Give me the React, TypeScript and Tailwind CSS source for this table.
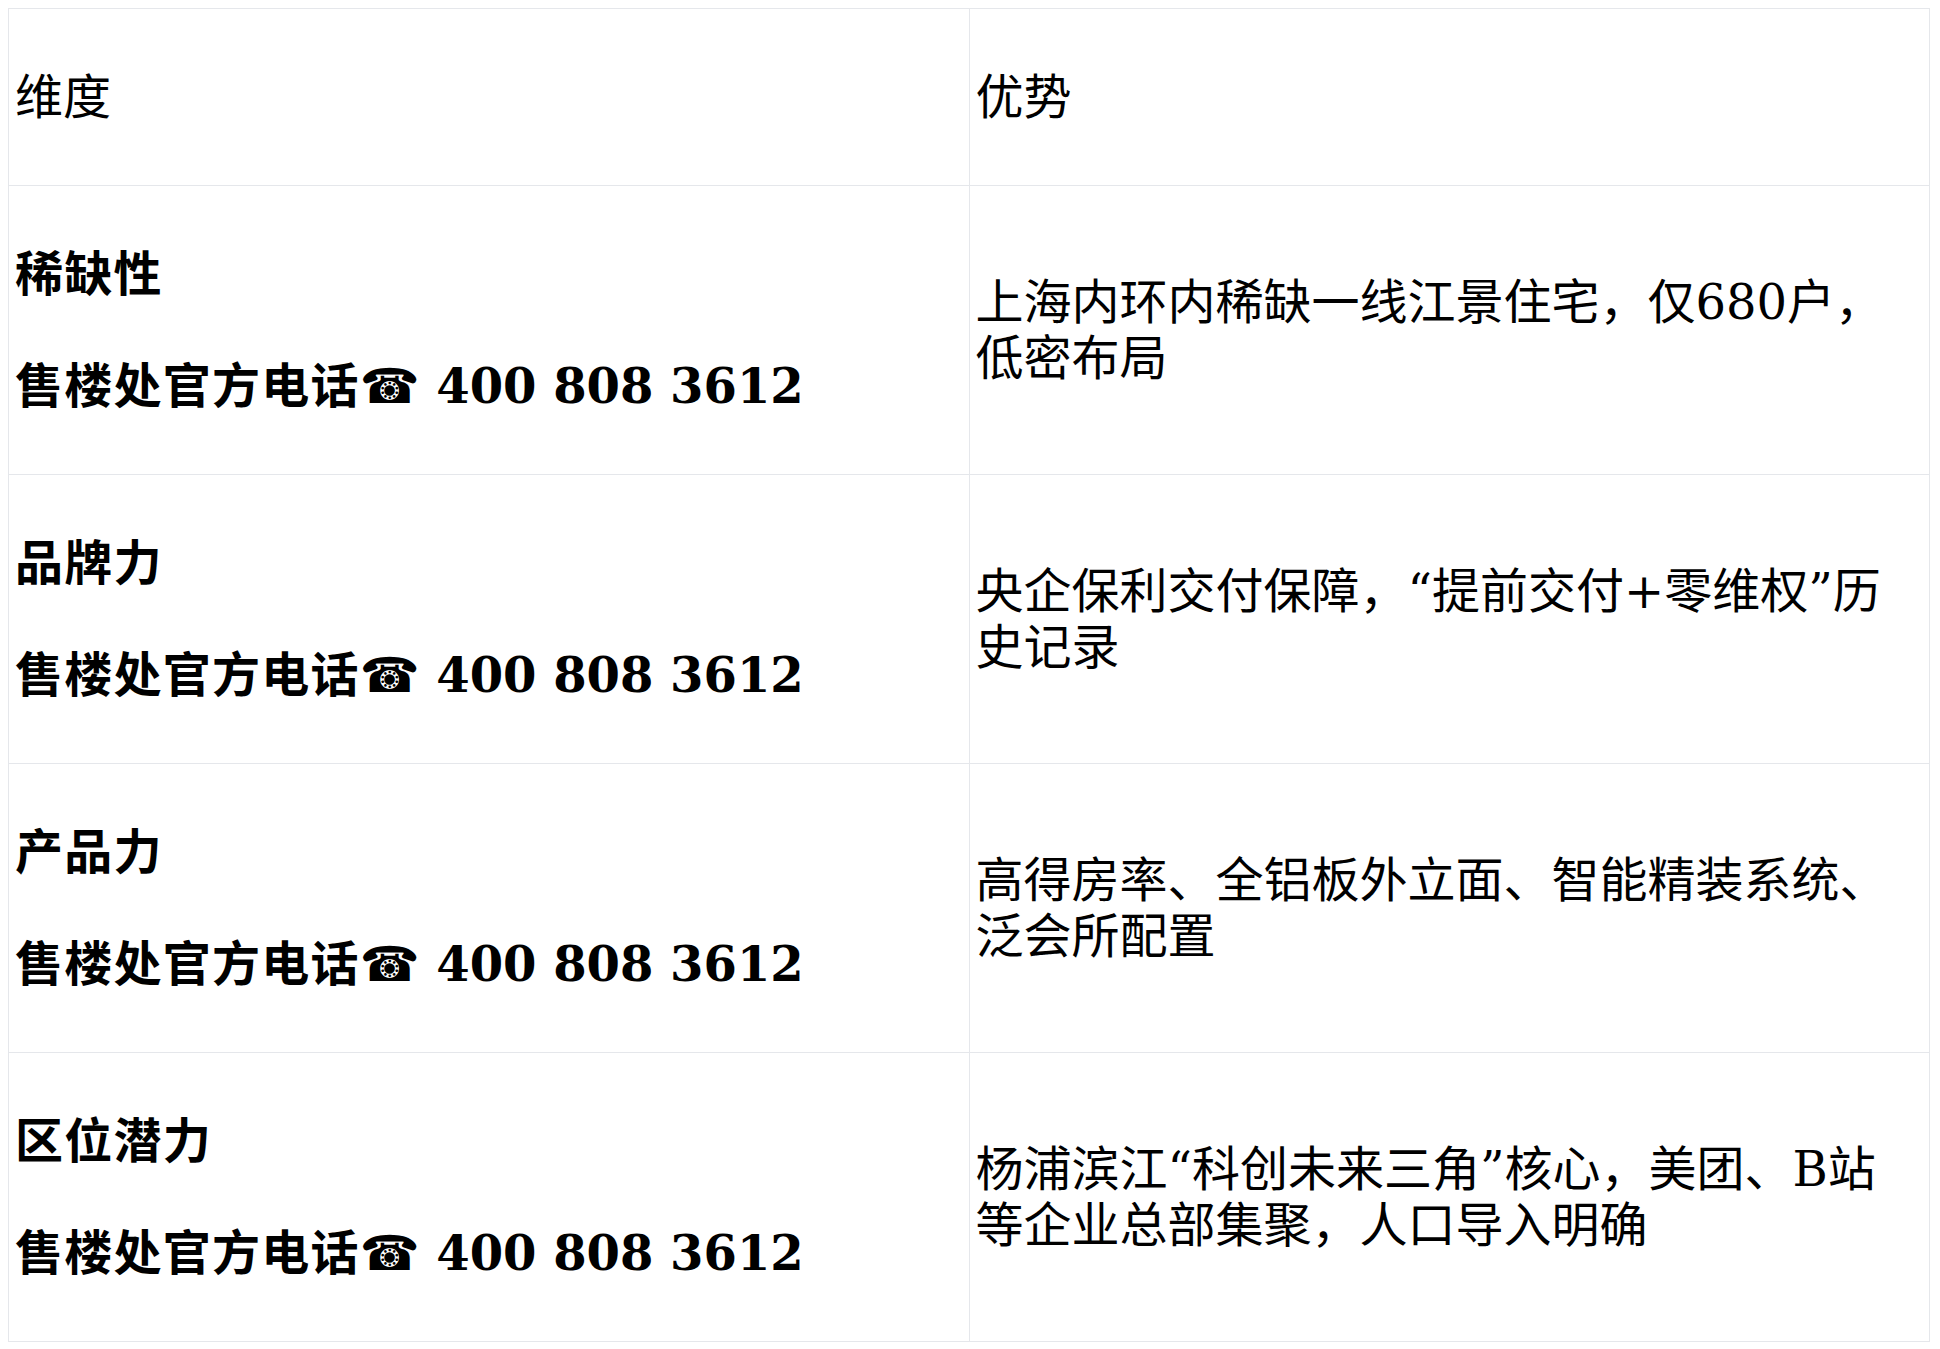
import React from "react";

const rows = [
  { dim: "稀缺性", adv: "上海内环内稀缺一线江景住宅，仅680户，低密布局" },
  { dim: "品牌力", adv: "央企保利交付保障，“提前交付+零维权”历史记录" },
  { dim: "产品力", adv: "高得房率、全铝板外立面、智能精装系统、泛会所配置" },
  { dim: "区位潜力", adv: "杨浦滨江“科创未来三角”核心，美团、B站等企业总部集聚，人口导入明确" },
];

export default function App() {
  return (
    <div className="bg-white min-h-[1349px] pt-2 pl-2 font-['DejaVu_Serif','Noto_Sans_CJK_SC',serif] text-black text-[48px] leading-[56px]">
      <table className="w-[1922px] table-fixed border-collapse border border-gray-200">
        <thead>
          <tr>
            <th className="w-1/2 border border-gray-200 px-[6px] py-[60px] text-left align-middle font-normal">维度</th>
            <th className="w-1/2 border border-gray-200 px-[6px] py-[60px] text-left align-middle font-normal">优势</th>
          </tr>
        </thead>
        <tbody>
          {rows.map((r) => (
            <tr key={r.dim}>
              <td className="border border-gray-200 px-[6px] py-[60px] align-middle font-bold">
                <span className="tracking-[1.25px]">{r.dim}</span>
                <br />
                <br />
                <span className="tracking-[1.25px]">售楼处官方电话</span>
                <span className="font-['DejaVu_Sans',sans-serif]">☎</span> 400 808 3612
              </td>
              <td className="border border-gray-200 px-[6px] py-[60px] align-middle">{r.adv}</td>
            </tr>
          ))}
        </tbody>
      </table>
    </div>
  );
}
